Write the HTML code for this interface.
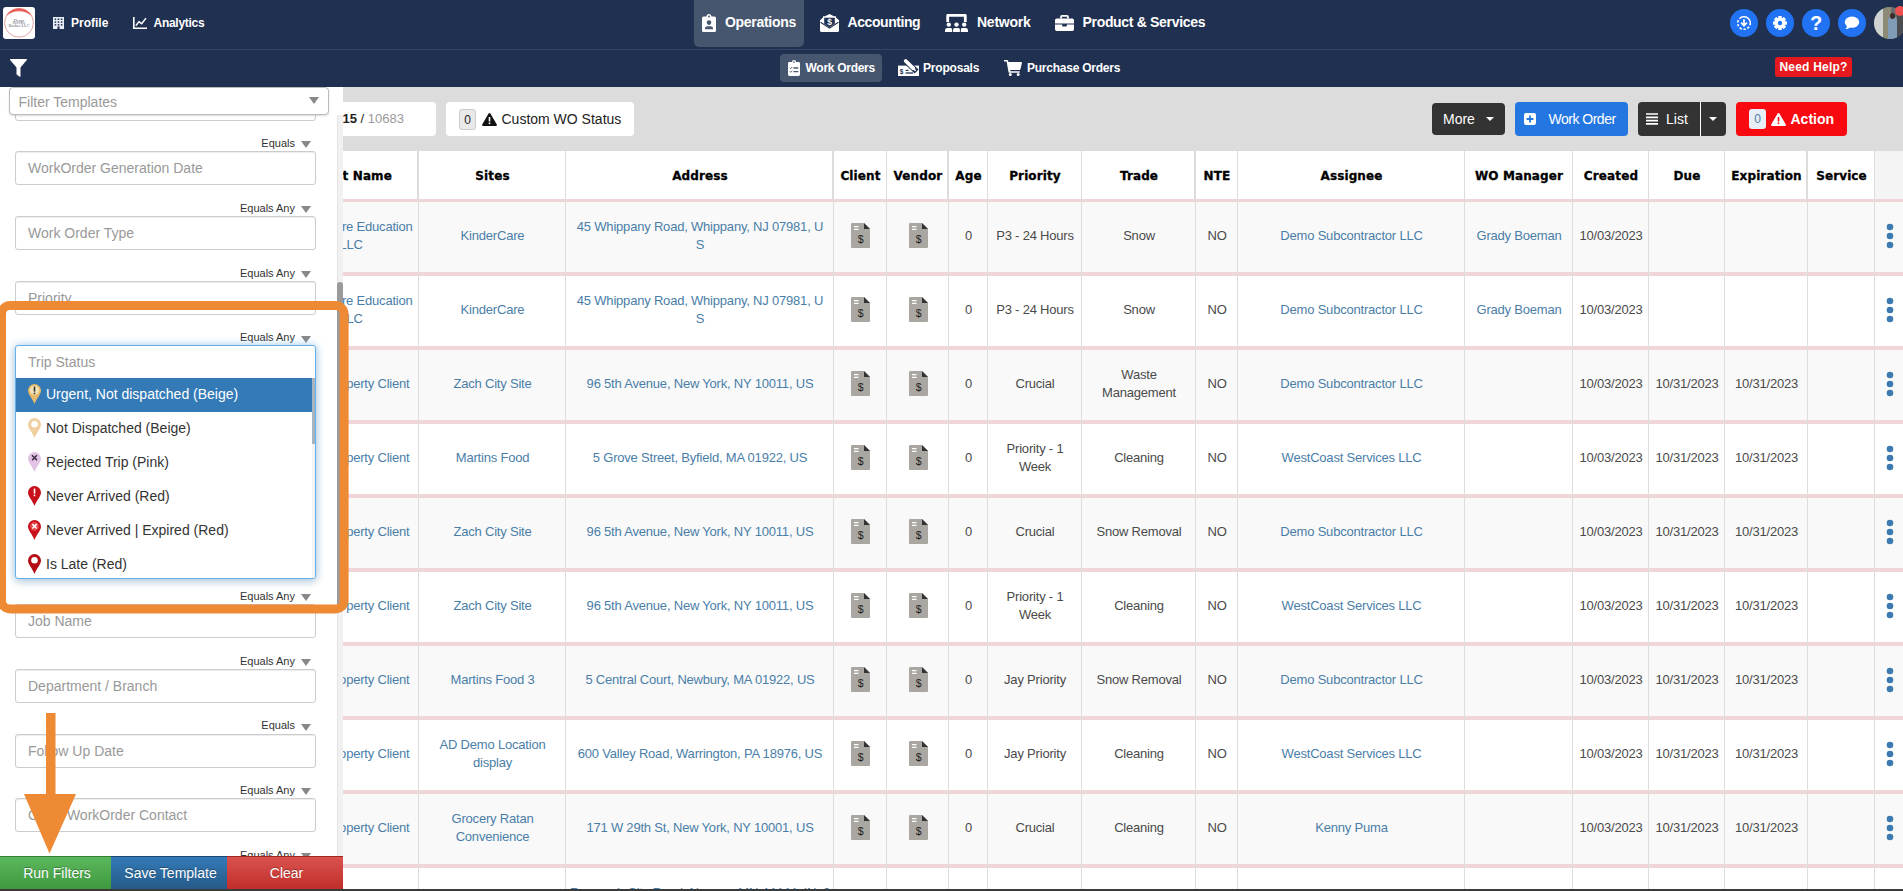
<!DOCTYPE html>
<html lang="en">
<head>
<meta charset="utf-8">
<title>Work Orders</title>
<style>
*{box-sizing:border-box;margin:0;padding:0}
html,body{width:1903px;height:891px;overflow:hidden;background:#dcdcdc;font-family:"Liberation Sans",Arial,sans-serif;color:#333}
svg{position:absolute;display:block;overflow:visible}
#nav{position:absolute;left:0;top:0;width:1903px;height:87px;background:#1f3050}
#navline{position:absolute;left:0;top:49px;width:1903px;height:1px;background:#35466a}
.nv{position:absolute;color:#fff;font-weight:bold;white-space:nowrap}
.n1{font-size:14px;top:14px;line-height:16px}
.n0{font-size:12px;top:16px;line-height:14px}
.n2{font-size:12px;top:61px;line-height:14px}
#optab{position:absolute;left:694px;top:0;width:110px;height:47px;background:#47566f;border-radius:0 0 5px 5px}
#wotab{position:absolute;left:780px;top:54px;width:102px;height:28px;background:#47566f;border-radius:4px}
.circ{position:absolute;top:9px;width:28px;height:28px;border-radius:50%;background:#2173f3}
#logo{position:absolute;left:3px;top:7px;width:32px;height:32px;background:#fff;border-radius:3px;overflow:hidden}
#needhelp{position:absolute;left:1775px;top:57px;width:77px;height:20px;background:#e61a1e;border-radius:3px;color:#fff;font-weight:bold;font-size:12px;line-height:20px;text-align:center;white-space:nowrap;letter-spacing:.2px}
/* toolbar */
.tb{position:absolute;top:102px;height:34px;border-radius:4px;font-size:14px;line-height:34px;white-space:nowrap;color:#fff}
.tb span{position:absolute;top:0}
/* table */
#tbl{position:absolute;left:343px;top:151px;width:1560px;height:738px;background:#fff;overflow:hidden}
.row{position:absolute;left:0;width:1560px;height:75px;border-top:3px solid #f1d6d8}
.row.odd{background:#f9f9f9}
.c{position:absolute;top:-2px;height:71px;display:flex;align-items:center;justify-content:center;text-align:center;font-size:13px;line-height:18px;letter-spacing:-.2px;padding-left:2px;color:#4a4a4a;white-space:nowrap}
.c>span{display:inline-block}
.c a{color:#4a7ea8;text-decoration:none}
.h{position:absolute;top:1px;height:48px;-webkit-text-stroke:.3px #000;letter-spacing:.12px;padding-left:2px;display:flex;align-items:center;justify-content:center;font-family:"DejaVu Sans","Liberation Sans",sans-serif;font-weight:bold;font-size:12px;color:#000;white-space:nowrap}
.vl{position:absolute;top:0;width:1px;height:740px;background:#dddddd}
/* panel */
#panel{position:absolute;left:0;top:87px;width:343px;height:802px;background:#fff;overflow:hidden}
.inp{position:absolute;left:15px;width:301px;height:34px;border:1px solid #ccc;border-radius:3px;background:#fff;font-size:14px;line-height:32px;padding-left:12px;color:#999;box-shadow:inset 0 1px 1px rgba(0,0,0,.075);white-space:nowrap}
.eq{position:absolute;right:48px;font-size:11px;line-height:12px;color:#333;white-space:nowrap}
.tri{position:absolute;left:301px;width:0;height:0;border-left:5px solid transparent;border-right:5px solid transparent;border-top:7.500px solid #888}
.opt{position:absolute;left:0;width:297px;height:34px;font-size:14px;line-height:34px;padding-left:30px;color:#333;white-space:nowrap}
.btn{position:absolute;top:769px;height:33px;padding-left:3px;color:#fff;font-size:14px;line-height:32px;border-top:1px solid rgba(0,0,0,.18);text-align:center;text-shadow:0 -1px 0 rgba(0,0,0,.3);white-space:nowrap}
</style>
</head>
<body>
<div id="nav">
<div id="navline"></div>
<div id="optab"></div><div id="wotab"></div>
<div id="logo"><svg width="32" height="32" viewBox="0 0 32 32" style="left:0;top:0"><circle cx="16" cy="15.800" r="14.400" fill="none" stroke="#dc8f8f" stroke-width="0.8"/><path d="M3.100 9 A14.600 14.600 0 0 1 28.900 9 A19.700 19.700 0 0 0 3.100 9Z" fill="#e8625c"/><text x="16" y="14.600" font-size="4.300" text-anchor="middle" fill="#667" font-family="Liberation Serif,serif">Demo</text><text x="16" y="17.400" font-size="4.300" text-anchor="middle" fill="#667" font-family="Liberation Serif,serif">Service</text><text x="16" y="20.200" font-size="4.300" text-anchor="middle" fill="#667" font-family="Liberation Serif,serif">Broker LLC</text></svg></div>
<svg width="11" height="12" viewBox="0 0 11 12" style="left:53px;top:17px"><path fill="#e9eef7" d="M0 0h11v12H6.6V9.6H4.4V12H0z"/><g fill="#1f3050"><rect x="1.6" y="1.5" width="1.6" height="1.5"/><rect x="4.7" y="1.5" width="1.6" height="1.5"/><rect x="7.8" y="1.5" width="1.6" height="1.5"/><rect x="1.6" y="4.3" width="1.6" height="1.5"/><rect x="4.7" y="4.3" width="1.6" height="1.5"/><rect x="7.8" y="4.3" width="1.6" height="1.5"/><rect x="1.6" y="7.1" width="1.6" height="1.5"/><rect x="4.7" y="7.1" width="1.6" height="1.5"/><rect x="7.8" y="7.1" width="1.6" height="1.5"/></g></svg>
<div class="nv n0" style="left:71px">Profile</div>
<svg width="14" height="12" viewBox="0 0 14 12" style="left:133px;top:17px"><path d="M0.8 0v11.2H14" fill="none" stroke="#fff" stroke-width="1.6"/><path d="M3.2 8.2L6 4.6l2.6 2.2L12.6 1.6" fill="none" stroke="#fff" stroke-width="1.5" stroke-linejoin="round" stroke-linecap="round"/></svg>
<div class="nv n0" style="left:153.5px;letter-spacing:-.27px">Analytics</div>
<svg width="14" height="18" viewBox="0 0 14 18" style="left:702px;top:14px"><path fill="#fff" d="M1.6 2.4h2.9a2.5 2.5 0 0 1 5 0h2.9A1.6 1.6 0 0 1 14 4v12.4A1.6 1.6 0 0 1 12.4 18H1.6A1.6 1.6 0 0 1 0 16.4V4a1.6 1.6 0 0 1 1.6-1.6z"/><circle cx="7" cy="2.5" r="0.9" fill="#47566f"/><circle cx="7" cy="8.6" r="2.3" fill="#47566f"/><path d="M3 15.2a2.6 2.6 0 0 1 2.6-2.9h2.8A2.6 2.6 0 0 1 11 15.2z" fill="#47566f"/></svg>
<div class="nv n1" style="left:725px;letter-spacing:-.3px">Operations</div>
<svg width="19" height="18" viewBox="0 0 19 18" style="left:820px;top:14px"><path fill="#fff" d="M0 6.2L3 3.6V2.2h2L9.5 0 14 2.2h2v1.4l3 2.6V16.4A1.6 1.6 0 0 1 17.4 18H1.6A1.6 1.6 0 0 1 0 16.4z"/><path fill="#1f3050" d="M4.200 3.800h10.600v6L9.500 13.400 4.200 9.800z"/><path d="M0.6 8.2l8.9 6 8.9-6" fill="none" stroke="#1f3050" stroke-width="1.1"/><text x="9.5" y="10.6" font-size="8.5" font-weight="bold" text-anchor="middle" fill="#fff" font-family="Liberation Sans,sans-serif">$</text></svg>
<div class="nv n1" style="left:847.5px;letter-spacing:-.43px">Accounting</div>
<svg width="23" height="18" viewBox="0 0 23 18" style="left:945px;top:14px"><path d="M2.700 8V1.400h17.600V8" fill="none" stroke="#fff" stroke-width="2.800" stroke-linejoin="round"/><g fill="#fff"><circle cx="3.800" cy="10.600" r="2.200"/><circle cx="11.500" cy="10.600" r="2.200"/><circle cx="19.200" cy="10.600" r="2.200"/><path d="M0 18v-1.600a2.400 2.400 0 0 1 2.400-2.400h2.800a2.400 2.400 0 0 1 2.400 2.400V18z"/><path d="M7.700 18v-1.600a2.400 2.400 0 0 1 2.400-2.400h2.800a2.400 2.400 0 0 1 2.400 2.400V18z"/><path d="M15.400 18v-1.600a2.400 2.400 0 0 1 2.400-2.400h2.800a2.400 2.400 0 0 1 2.400 2.400V18z"/></g><path d="M7.65 13v5M15.35 13v5" stroke="#1f3050" stroke-width="0.9"/></svg>
<div class="nv n1" style="left:977px;letter-spacing:-.24px">Network</div>
<svg width="19" height="16" viewBox="0 0 19 16" style="left:1055px;top:15px"><path d="M6 3.4V1.9A1 1 0 0 1 7 .9h5a1 1 0 0 1 1 1v1.5" fill="none" stroke="#fff" stroke-width="1.8"/><path fill="#fff" d="M1.7 3.4h15.6A1.7 1.7 0 0 1 19 5.1V8.4H0V5.1a1.7 1.7 0 0 1 1.7-1.7z"/><path fill="#fff" d="M0 9.6h7.2v1.1a.7.7 0 0 0 .7.7h3.2a.7.7 0 0 0 .7-.7V9.6H19v4.7a1.7 1.7 0 0 1-1.7 1.7H1.7A1.7 1.7 0 0 1 0 14.300z"/></svg>
<div class="nv n1" style="left:1082.5px;letter-spacing:-.32px">Product &amp; Services</div>
<div class="circ" style="left:1730px"></div>
<div class="circ" style="left:1766px"></div>
<div class="circ" style="left:1802px"></div>
<div class="circ" style="left:1838px"></div>
<svg width="28" height="28" viewBox="0 0 28 28" style="left:1730px;top:9px"><circle cx="14" cy="14" r="6.3" fill="none" stroke="#fff" stroke-width="1.6" stroke-dasharray="13 1.6 2.4 1.6 2.4 1.6 2.4 1.6 2.4 1.6 2.4 1.6" transform="rotate(-100 14 14)"/><path d="M14 10.2v5.6M11.2 13.6L14 16.8l2.8-3.200" stroke="#fff" stroke-width="1.7" fill="none"/></svg>
<svg width="28" height="28" viewBox="0 0 28 28" style="left:1766px;top:9px"><g transform="translate(14 14)" fill="#fff"><rect x="-1.800" y="-7" width="3.600" height="14" rx=".6" transform="rotate(0)"/><rect x="-1.800" y="-7" width="3.600" height="14" rx=".6" transform="rotate(45)"/><rect x="-1.800" y="-7" width="3.600" height="14" rx=".6" transform="rotate(90)"/><rect x="-1.800" y="-7" width="3.600" height="14" rx=".6" transform="rotate(135)"/><circle r="5.300"/></g><circle cx="14" cy="14" r="2.200" fill="#2173f3"/></svg>
<div class="nv" style="left:1802px;top:9px;width:28px;text-align:center;font-size:20px;line-height:28px;font-weight:bold">?</div>
<svg width="28" height="28" viewBox="0 0 28 28" style="left:1838px;top:9px"><ellipse cx="14" cy="13.2" rx="7.2" ry="5.6" fill="#fff"/><path d="M9 16.5c0 1.600-.8 3-1.800 3.600 2.200.1 4.200-.8 5.300-2.100z" fill="#fff"/></svg>
<div style="position:absolute;left:1874px;top:7px;width:32px;height:32px;border-radius:50%;overflow:hidden;background:#6a6d70"><div style="position:absolute;left:0;top:0;width:9px;height:32px;background:#cfd3d2"></div><div style="position:absolute;left:9px;top:0;width:8px;height:32px;background:#8d8a78"></div><div style="position:absolute;left:14px;top:10px;width:9px;height:22px;background:#7f9bb5;border-radius:3px 3px 0 0"></div><div style="position:absolute;left:16px;top:6px;width:5px;height:6px;background:#3a2c28;border-radius:50%"></div><div style="position:absolute;left:23px;top:0;width:9px;height:32px;background:#4a4c50"></div></div>
<div style="position:absolute;left:1895px;top:6px;width:10px;height:10px;border-radius:50%;background:#f0504f"></div>
<svg width="17" height="18" viewBox="0 0 17 18" style="left:9.5px;top:59px"><path fill="#fff" d="M.6 0h15.8a.6.6 0 0 1 .45 1L10.500 8.400V17.200a.6.6 0 0 1-1 .5L6.800 15.600a.9.9 0 0 1-.3-.7V8.400L.15 1A.6.6 0 0 1 .6 0z"/></svg>
<svg width="12" height="16" viewBox="0 0 12 16" style="left:788px;top:60px"><path fill="#fff" d="M1.400 2h2.500a2.100 2.100 0 0 1 4.200 0h2.500A1.400 1.400 0 0 1 12 3.400v11.200A1.400 1.400 0 0 1 10.600 16H1.400A1.400 1.400 0 0 1 0 14.600V3.400A1.400 1.400 0 0 1 1.400 2z"/><circle cx="6" cy="2.100" r=".8" fill="#47566f"/><g stroke="#47566f" stroke-width="1.400" fill="none"><path d="M5.400 8h4.800M5.400 11.600h4.800"/><path d="M1.800 7.800l.9.900 1.500-1.700M1.800 11.400l.9.900 1.500-1.700" stroke-width=".9"/></g></svg>
<div class="nv n2" style="left:805.5px;letter-spacing:-.28px">Work Orders</div>
<svg width="21" height="17" viewBox="0 0 21 17" style="left:898px;top:59px"><rect x="0" y="6.600" width="21" height="10.400" fill="#fff"/><path d="M6.600 0.900L18.600 12.600" stroke="#1f3050" stroke-width="5.600"/><path d="M7.700 2L15 9.100" stroke="#fff" stroke-width="3.800" stroke-linecap="round"/><path d="M13.500 10.500l2.900-2.900 1.700 4.600z" fill="#fff"/><path d="M7.600 14h7.400" stroke="#1f3050" stroke-width="1.300"/><path d="M7.600 11.400h3" stroke="#1f3050" stroke-width="1.100"/><text x="3.600" y="15.200" font-size="6.500" font-weight="bold" text-anchor="middle" fill="#1f3050" font-family="Liberation Sans,sans-serif">$</text></svg>
<div class="nv n2" style="left:923px;letter-spacing:-.2px">Proposals</div>
<svg width="18" height="16" viewBox="0 0 18 16" style="left:1004px;top:60px"><path fill="#fff" d="M0 0h3.300a.8.800 0 0 1 .75.600L4.400 2H17.200a.8.800 0 0 1 .75 1L16.400 9.300a.8.800 0 0 1-.75.600H6.200l.3 1.400h8.900a.8.800 0 0 1 0 1.500H5.300a.8.800 0 0 1-.75-.6L2.600 1.500H0z"/><circle cx="6.300" cy="14.500" r="1.500" fill="#fff"/><circle cx="14.200" cy="14.500" r="1.500" fill="#fff"/></svg>
<div class="nv n2" style="left:1027px;letter-spacing:-.24px">Purchase Orders</div>
<div id="needhelp">Need Help?</div>
</div>
<div class="tb" style="left:300px;width:136px;background:#fff;color:#222;font-size:13px"><span style="left:42.500px"><b style="color:#222">15</b> / <span style="position:static;color:#999">10683</span></span></div>
<div class="tb" style="left:446px;width:188px;background:#fff;color:#222"><div style="position:absolute;left:13px;top:7px;width:17px;height:21px;border:1px solid #ccc;border-radius:3px;background:#e9e9e9;font-size:12px;line-height:21px;text-align:center;color:#222">0</div><svg width="15" height="13" viewBox="0 0 15 13" style="left:36px;top:11px"><path d="M7.500 0a1 1 0 0 1 .9.500l6.400 11a1 1 0 0 1-.9 1.500H1.100a1 1 0 0 1-.9-1.500L6.600.5a1 1 0 0 1 .9-.5z" fill="#111"/><rect x="6.700" y="4" width="1.600" height="4.500" fill="#fff"/><rect x="6.700" y="9.500" width="1.600" height="1.600" fill="#fff"/></svg><span style="left:55.500px">Custom WO Status</span></div>
<div class="tb" style="left:1432px;top:103px;height:32px;line-height:32px;width:73px;background:#333"><span style="left:11px">More</span><div style="position:absolute;left:53.500px;top:14px;border-left:4px solid transparent;border-right:4px solid transparent;border-top:4px solid #fff"></div></div>
<div class="tb" style="left:1515px;width:113px;background:#2476e0"><svg width="12" height="12" viewBox="0 0 12 12" style="left:8.500px;top:11px"><rect width="12" height="12" rx="2" fill="#fff"/><path d="M6 2.600v6.800M2.600 6h6.800" stroke="#2476e0" stroke-width="1.800"/></svg><span style="left:33.500px;letter-spacing:-.5px">Work Order</span></div>
<div class="tb" style="left:1638px;width:88px;background:#333"><svg width="12" height="12" viewBox="0 0 12 12" style="left:8px;top:11px"><path d="M0 1h12M0 4.300h12M0 7.600h12M0 10.900h12" stroke="#fff" stroke-width="1.700"/></svg><span style="left:28px">List</span><div style="position:absolute;left:62px;top:0;width:1px;height:34px;background:#fff"></div><div style="position:absolute;left:71px;top:15px;border-left:4px solid transparent;border-right:4px solid transparent;border-top:4px solid #fff"></div></div>
<div class="tb" style="left:1736px;width:111px;background:#f80a10"><div style="position:absolute;left:13px;top:7px;width:17px;height:20px;border-radius:3px;background:#e8eef6;font-size:12px;line-height:20px;text-align:center;color:#4a7ea8">0</div><svg width="15" height="13" viewBox="0 0 15 13" style="left:34.500px;top:10.500px"><path d="M7.500 0a1 1 0 0 1 .9.500l6.400 11a1 1 0 0 1-.9 1.500H1.100a1 1 0 0 1-.9-1.500L6.600.5a1 1 0 0 1 .9-.5z" fill="#fff"/><rect x="6.700" y="4" width="1.600" height="4.500" fill="#f80a10"/><rect x="6.700" y="9.500" width="1.600" height="1.600" fill="#f80a10"/></svg><span style="left:54.500px;font-weight:bold">Action</span></div>
<div id="tbl">
<div class="vl" style="left:75px;z-index:2"></div>
<div class="vl" style="left:222px;z-index:2"></div>
<div class="vl" style="left:490px;z-index:2"></div>
<div class="vl" style="left:543px;z-index:2"></div>
<div class="vl" style="left:605px;z-index:2"></div>
<div class="vl" style="left:644px;z-index:2"></div>
<div class="vl" style="left:738px;z-index:2"></div>
<div class="vl" style="left:852px;z-index:2"></div>
<div class="vl" style="left:894px;z-index:2"></div>
<div class="vl" style="left:1121px;z-index:2"></div>
<div class="vl" style="left:1229px;z-index:2"></div>
<div class="vl" style="left:1305px;z-index:2"></div>
<div class="vl" style="left:1381px;z-index:2"></div>
<div class="vl" style="left:1464px;z-index:2"></div>
<div class="vl" style="left:1531px;z-index:2"></div>
<div style="position:absolute;left:1532px;top:0;width:30px;height:48px;background:#f4f4f4"></div>
<div style="position:absolute;left:74px;top:0;width:2px;height:48px;background:#dcdcdc;z-index:2"></div>
<div style="position:absolute;left:489px;top:0;width:2px;height:48px;background:#dcdcdc;z-index:2"></div>
<div style="position:absolute;left:604px;top:0;width:2px;height:48px;background:#dcdcdc;z-index:2"></div>
<div style="position:absolute;left:851px;top:0;width:2px;height:48px;background:#dcdcdc;z-index:2"></div>
<div style="position:absolute;left:1463px;top:0;width:2px;height:48px;background:#dcdcdc;z-index:2"></div>
<div class="h" style="left:-61px;width:136px;justify-content:flex-end;padding-right:26px">Client Name</div>
<div class="h" style="left:75px;width:147px">Sites</div>
<div class="h" style="left:222px;width:268px">Address</div>
<div class="h" style="left:490px;width:53px">Client</div>
<div class="h" style="left:543px;width:62px">Vendor</div>
<div class="h" style="left:605px;width:39px">Age</div>
<div class="h" style="left:644px;width:94px">Priority</div>
<div class="h" style="left:738px;width:114px">Trade</div>
<div class="h" style="left:852px;width:42px">NTE</div>
<div class="h" style="left:894px;width:227px">Assignee</div>
<div class="h" style="left:1121px;width:108px">WO Manager</div>
<div class="h" style="left:1229px;width:76px">Created</div>
<div class="h" style="left:1305px;width:76px">Due</div>
<div class="h" style="left:1381px;width:83px">Expiration</div>
<div class="h" style="left:1464px;width:67px">Service</div>
<div class="row odd" style="top:48px;border-top-width:3px">
<div class="c" style="left:-61px;width:136px"><span><a>KinderCare Education<br>LLC</a></span></div>
<div class="c" style="left:75px;width:147px;"><span><a>KinderCare</a></span></div>
<div class="c" style="left:222px;width:268px;"><span><a>45 Whippany Road, Whippany, NJ 07981, U<br>S</a></span></div>
<div class="c" style="left:490px;width:53px"><svg width="19" height="25" viewBox="0 0 19 25" style="position:static"><path d="M1 0h12l6 6v18a1 1 0 0 1-1 1H1a1 1 0 0 1-1-1V1a1 1 0 0 1 1-1z" fill="#aaa6a1"/><path d="M13 0l6 6h-6z" fill="#333"/><path d="M3 3.600h4.500M3 6.400h4.500" stroke="#fff" stroke-width="1.400"/><text x="9.500" y="20" font-size="10.500" text-anchor="middle" fill="#222" font-family="Liberation Sans,sans-serif">$</text></svg></div>
<div class="c" style="left:543px;width:62px"><svg width="19" height="25" viewBox="0 0 19 25" style="position:static"><path d="M1 0h12l6 6v18a1 1 0 0 1-1 1H1a1 1 0 0 1-1-1V1a1 1 0 0 1 1-1z" fill="#aaa6a1"/><path d="M13 0l6 6h-6z" fill="#333"/><path d="M3 3.600h4.500M3 6.400h4.500" stroke="#fff" stroke-width="1.400"/><text x="9.500" y="20" font-size="10.500" text-anchor="middle" fill="#222" font-family="Liberation Sans,sans-serif">$</text></svg></div>
<div class="c" style="left:605px;width:39px;"><span>0</span></div>
<div class="c" style="left:644px;width:94px;"><span>P3 - 24 Hours</span></div>
<div class="c" style="left:738px;width:114px;"><span>Snow</span></div>
<div class="c" style="left:852px;width:42px;"><span>NO</span></div>
<div class="c" style="left:894px;width:227px;"><span><a>Demo Subcontractor LLC</a></span></div>
<div class="c" style="left:1121px;width:108px;"><span><a>Grady Boeman</a></span></div>
<div class="c" style="left:1229px;width:76px;"><span>10/03/2023</span></div>
<div class="c" style="left:1532px;width:28px"><svg width="8" height="26" viewBox="0 0 8 26" style="position:static"><circle cx="4" cy="4" r="3.300" fill="#3d7ab0"/><circle cx="4" cy="13" r="3.300" fill="#3d7ab0"/><circle cx="4" cy="22" r="3.300" fill="#3d7ab0"/></svg></div>
</div>
<div class="row" style="top:121px;border-top-width:4px">
<div class="c" style="left:-61px;width:136px"><span><a>KinderCare Education<br>LLC</a></span></div>
<div class="c" style="left:75px;width:147px;"><span><a>KinderCare</a></span></div>
<div class="c" style="left:222px;width:268px;"><span><a>45 Whippany Road, Whippany, NJ 07981, U<br>S</a></span></div>
<div class="c" style="left:490px;width:53px"><svg width="19" height="25" viewBox="0 0 19 25" style="position:static"><path d="M1 0h12l6 6v18a1 1 0 0 1-1 1H1a1 1 0 0 1-1-1V1a1 1 0 0 1 1-1z" fill="#aaa6a1"/><path d="M13 0l6 6h-6z" fill="#333"/><path d="M3 3.600h4.500M3 6.400h4.500" stroke="#fff" stroke-width="1.400"/><text x="9.500" y="20" font-size="10.500" text-anchor="middle" fill="#222" font-family="Liberation Sans,sans-serif">$</text></svg></div>
<div class="c" style="left:543px;width:62px"><svg width="19" height="25" viewBox="0 0 19 25" style="position:static"><path d="M1 0h12l6 6v18a1 1 0 0 1-1 1H1a1 1 0 0 1-1-1V1a1 1 0 0 1 1-1z" fill="#aaa6a1"/><path d="M13 0l6 6h-6z" fill="#333"/><path d="M3 3.600h4.500M3 6.400h4.500" stroke="#fff" stroke-width="1.400"/><text x="9.500" y="20" font-size="10.500" text-anchor="middle" fill="#222" font-family="Liberation Sans,sans-serif">$</text></svg></div>
<div class="c" style="left:605px;width:39px;"><span>0</span></div>
<div class="c" style="left:644px;width:94px;"><span>P3 - 24 Hours</span></div>
<div class="c" style="left:738px;width:114px;"><span>Snow</span></div>
<div class="c" style="left:852px;width:42px;"><span>NO</span></div>
<div class="c" style="left:894px;width:227px;"><span><a>Demo Subcontractor LLC</a></span></div>
<div class="c" style="left:1121px;width:108px;"><span><a>Grady Boeman</a></span></div>
<div class="c" style="left:1229px;width:76px;"><span>10/03/2023</span></div>
<div class="c" style="left:1532px;width:28px"><svg width="8" height="26" viewBox="0 0 8 26" style="position:static"><circle cx="4" cy="4" r="3.300" fill="#3d7ab0"/><circle cx="4" cy="13" r="3.300" fill="#3d7ab0"/><circle cx="4" cy="22" r="3.300" fill="#3d7ab0"/></svg></div>
</div>
<div class="row odd" style="top:195px;border-top-width:4px">
<div class="c" style="left:-61px;width:136px;justify-content:flex-end;padding-right:8.500px"><span><a>Property Client</a></span></div>
<div class="c" style="left:75px;width:147px;"><span><a>Zach City Site</a></span></div>
<div class="c" style="left:222px;width:268px;"><span><a>96 5th Avenue, New York, NY 10011, US</a></span></div>
<div class="c" style="left:490px;width:53px"><svg width="19" height="25" viewBox="0 0 19 25" style="position:static"><path d="M1 0h12l6 6v18a1 1 0 0 1-1 1H1a1 1 0 0 1-1-1V1a1 1 0 0 1 1-1z" fill="#aaa6a1"/><path d="M13 0l6 6h-6z" fill="#333"/><path d="M3 3.600h4.500M3 6.400h4.500" stroke="#fff" stroke-width="1.400"/><text x="9.500" y="20" font-size="10.500" text-anchor="middle" fill="#222" font-family="Liberation Sans,sans-serif">$</text></svg></div>
<div class="c" style="left:543px;width:62px"><svg width="19" height="25" viewBox="0 0 19 25" style="position:static"><path d="M1 0h12l6 6v18a1 1 0 0 1-1 1H1a1 1 0 0 1-1-1V1a1 1 0 0 1 1-1z" fill="#aaa6a1"/><path d="M13 0l6 6h-6z" fill="#333"/><path d="M3 3.600h4.500M3 6.400h4.500" stroke="#fff" stroke-width="1.400"/><text x="9.500" y="20" font-size="10.500" text-anchor="middle" fill="#222" font-family="Liberation Sans,sans-serif">$</text></svg></div>
<div class="c" style="left:605px;width:39px;"><span>0</span></div>
<div class="c" style="left:644px;width:94px;"><span>Crucial</span></div>
<div class="c" style="left:738px;width:114px;"><span>Waste<br>Management</span></div>
<div class="c" style="left:852px;width:42px;"><span>NO</span></div>
<div class="c" style="left:894px;width:227px;"><span><a>Demo Subcontractor LLC</a></span></div>
<div class="c" style="left:1229px;width:76px;"><span>10/03/2023</span></div>
<div class="c" style="left:1305px;width:76px;"><span>10/31/2023</span></div>
<div class="c" style="left:1381px;width:83px;"><span>10/31/2023</span></div>
<div class="c" style="left:1532px;width:28px"><svg width="8" height="26" viewBox="0 0 8 26" style="position:static"><circle cx="4" cy="4" r="3.300" fill="#3d7ab0"/><circle cx="4" cy="13" r="3.300" fill="#3d7ab0"/><circle cx="4" cy="22" r="3.300" fill="#3d7ab0"/></svg></div>
</div>
<div class="row" style="top:269px;border-top-width:4px">
<div class="c" style="left:-61px;width:136px;justify-content:flex-end;padding-right:8.500px"><span><a>Property Client</a></span></div>
<div class="c" style="left:75px;width:147px;"><span><a>Martins Food</a></span></div>
<div class="c" style="left:222px;width:268px;"><span><a>5 Grove Street, Byfield, MA 01922, US</a></span></div>
<div class="c" style="left:490px;width:53px"><svg width="19" height="25" viewBox="0 0 19 25" style="position:static"><path d="M1 0h12l6 6v18a1 1 0 0 1-1 1H1a1 1 0 0 1-1-1V1a1 1 0 0 1 1-1z" fill="#aaa6a1"/><path d="M13 0l6 6h-6z" fill="#333"/><path d="M3 3.600h4.500M3 6.400h4.500" stroke="#fff" stroke-width="1.400"/><text x="9.500" y="20" font-size="10.500" text-anchor="middle" fill="#222" font-family="Liberation Sans,sans-serif">$</text></svg></div>
<div class="c" style="left:543px;width:62px"><svg width="19" height="25" viewBox="0 0 19 25" style="position:static"><path d="M1 0h12l6 6v18a1 1 0 0 1-1 1H1a1 1 0 0 1-1-1V1a1 1 0 0 1 1-1z" fill="#aaa6a1"/><path d="M13 0l6 6h-6z" fill="#333"/><path d="M3 3.600h4.500M3 6.400h4.500" stroke="#fff" stroke-width="1.400"/><text x="9.500" y="20" font-size="10.500" text-anchor="middle" fill="#222" font-family="Liberation Sans,sans-serif">$</text></svg></div>
<div class="c" style="left:605px;width:39px;"><span>0</span></div>
<div class="c" style="left:644px;width:94px;"><span>Priority - 1<br>Week</span></div>
<div class="c" style="left:738px;width:114px;"><span>Cleaning</span></div>
<div class="c" style="left:852px;width:42px;"><span>NO</span></div>
<div class="c" style="left:894px;width:227px;"><span><a>WestCoast Services LLC</a></span></div>
<div class="c" style="left:1229px;width:76px;"><span>10/03/2023</span></div>
<div class="c" style="left:1305px;width:76px;"><span>10/31/2023</span></div>
<div class="c" style="left:1381px;width:83px;"><span>10/31/2023</span></div>
<div class="c" style="left:1532px;width:28px"><svg width="8" height="26" viewBox="0 0 8 26" style="position:static"><circle cx="4" cy="4" r="3.300" fill="#3d7ab0"/><circle cx="4" cy="13" r="3.300" fill="#3d7ab0"/><circle cx="4" cy="22" r="3.300" fill="#3d7ab0"/></svg></div>
</div>
<div class="row odd" style="top:343px;border-top-width:4px">
<div class="c" style="left:-61px;width:136px;justify-content:flex-end;padding-right:8.500px"><span><a>Property Client</a></span></div>
<div class="c" style="left:75px;width:147px;"><span><a>Zach City Site</a></span></div>
<div class="c" style="left:222px;width:268px;"><span><a>96 5th Avenue, New York, NY 10011, US</a></span></div>
<div class="c" style="left:490px;width:53px"><svg width="19" height="25" viewBox="0 0 19 25" style="position:static"><path d="M1 0h12l6 6v18a1 1 0 0 1-1 1H1a1 1 0 0 1-1-1V1a1 1 0 0 1 1-1z" fill="#aaa6a1"/><path d="M13 0l6 6h-6z" fill="#333"/><path d="M3 3.600h4.500M3 6.400h4.500" stroke="#fff" stroke-width="1.400"/><text x="9.500" y="20" font-size="10.500" text-anchor="middle" fill="#222" font-family="Liberation Sans,sans-serif">$</text></svg></div>
<div class="c" style="left:543px;width:62px"><svg width="19" height="25" viewBox="0 0 19 25" style="position:static"><path d="M1 0h12l6 6v18a1 1 0 0 1-1 1H1a1 1 0 0 1-1-1V1a1 1 0 0 1 1-1z" fill="#aaa6a1"/><path d="M13 0l6 6h-6z" fill="#333"/><path d="M3 3.600h4.500M3 6.400h4.500" stroke="#fff" stroke-width="1.400"/><text x="9.500" y="20" font-size="10.500" text-anchor="middle" fill="#222" font-family="Liberation Sans,sans-serif">$</text></svg></div>
<div class="c" style="left:605px;width:39px;"><span>0</span></div>
<div class="c" style="left:644px;width:94px;"><span>Crucial</span></div>
<div class="c" style="left:738px;width:114px;"><span>Snow Removal</span></div>
<div class="c" style="left:852px;width:42px;"><span>NO</span></div>
<div class="c" style="left:894px;width:227px;"><span><a>Demo Subcontractor LLC</a></span></div>
<div class="c" style="left:1229px;width:76px;"><span>10/03/2023</span></div>
<div class="c" style="left:1305px;width:76px;"><span>10/31/2023</span></div>
<div class="c" style="left:1381px;width:83px;"><span>10/31/2023</span></div>
<div class="c" style="left:1532px;width:28px"><svg width="8" height="26" viewBox="0 0 8 26" style="position:static"><circle cx="4" cy="4" r="3.300" fill="#3d7ab0"/><circle cx="4" cy="13" r="3.300" fill="#3d7ab0"/><circle cx="4" cy="22" r="3.300" fill="#3d7ab0"/></svg></div>
</div>
<div class="row" style="top:417px;border-top-width:4px">
<div class="c" style="left:-61px;width:136px;justify-content:flex-end;padding-right:8.500px"><span><a>Property Client</a></span></div>
<div class="c" style="left:75px;width:147px;"><span><a>Zach City Site</a></span></div>
<div class="c" style="left:222px;width:268px;"><span><a>96 5th Avenue, New York, NY 10011, US</a></span></div>
<div class="c" style="left:490px;width:53px"><svg width="19" height="25" viewBox="0 0 19 25" style="position:static"><path d="M1 0h12l6 6v18a1 1 0 0 1-1 1H1a1 1 0 0 1-1-1V1a1 1 0 0 1 1-1z" fill="#aaa6a1"/><path d="M13 0l6 6h-6z" fill="#333"/><path d="M3 3.600h4.500M3 6.400h4.500" stroke="#fff" stroke-width="1.400"/><text x="9.500" y="20" font-size="10.500" text-anchor="middle" fill="#222" font-family="Liberation Sans,sans-serif">$</text></svg></div>
<div class="c" style="left:543px;width:62px"><svg width="19" height="25" viewBox="0 0 19 25" style="position:static"><path d="M1 0h12l6 6v18a1 1 0 0 1-1 1H1a1 1 0 0 1-1-1V1a1 1 0 0 1 1-1z" fill="#aaa6a1"/><path d="M13 0l6 6h-6z" fill="#333"/><path d="M3 3.600h4.500M3 6.400h4.500" stroke="#fff" stroke-width="1.400"/><text x="9.500" y="20" font-size="10.500" text-anchor="middle" fill="#222" font-family="Liberation Sans,sans-serif">$</text></svg></div>
<div class="c" style="left:605px;width:39px;"><span>0</span></div>
<div class="c" style="left:644px;width:94px;"><span>Priority - 1<br>Week</span></div>
<div class="c" style="left:738px;width:114px;"><span>Cleaning</span></div>
<div class="c" style="left:852px;width:42px;"><span>NO</span></div>
<div class="c" style="left:894px;width:227px;"><span><a>WestCoast Services LLC</a></span></div>
<div class="c" style="left:1229px;width:76px;"><span>10/03/2023</span></div>
<div class="c" style="left:1305px;width:76px;"><span>10/31/2023</span></div>
<div class="c" style="left:1381px;width:83px;"><span>10/31/2023</span></div>
<div class="c" style="left:1532px;width:28px"><svg width="8" height="26" viewBox="0 0 8 26" style="position:static"><circle cx="4" cy="4" r="3.300" fill="#3d7ab0"/><circle cx="4" cy="13" r="3.300" fill="#3d7ab0"/><circle cx="4" cy="22" r="3.300" fill="#3d7ab0"/></svg></div>
</div>
<div class="row odd" style="top:491px;border-top-width:4px">
<div class="c" style="left:-61px;width:136px;justify-content:flex-end;padding-right:8.500px"><span><a>Property Client</a></span></div>
<div class="c" style="left:75px;width:147px;"><span><a>Martins Food 3</a></span></div>
<div class="c" style="left:222px;width:268px;"><span><a>5 Central Court, Newbury, MA 01922, US</a></span></div>
<div class="c" style="left:490px;width:53px"><svg width="19" height="25" viewBox="0 0 19 25" style="position:static"><path d="M1 0h12l6 6v18a1 1 0 0 1-1 1H1a1 1 0 0 1-1-1V1a1 1 0 0 1 1-1z" fill="#aaa6a1"/><path d="M13 0l6 6h-6z" fill="#333"/><path d="M3 3.600h4.500M3 6.400h4.500" stroke="#fff" stroke-width="1.400"/><text x="9.500" y="20" font-size="10.500" text-anchor="middle" fill="#222" font-family="Liberation Sans,sans-serif">$</text></svg></div>
<div class="c" style="left:543px;width:62px"><svg width="19" height="25" viewBox="0 0 19 25" style="position:static"><path d="M1 0h12l6 6v18a1 1 0 0 1-1 1H1a1 1 0 0 1-1-1V1a1 1 0 0 1 1-1z" fill="#aaa6a1"/><path d="M13 0l6 6h-6z" fill="#333"/><path d="M3 3.600h4.500M3 6.400h4.500" stroke="#fff" stroke-width="1.400"/><text x="9.500" y="20" font-size="10.500" text-anchor="middle" fill="#222" font-family="Liberation Sans,sans-serif">$</text></svg></div>
<div class="c" style="left:605px;width:39px;"><span>0</span></div>
<div class="c" style="left:644px;width:94px;"><span>Jay Priority</span></div>
<div class="c" style="left:738px;width:114px;"><span>Snow Removal</span></div>
<div class="c" style="left:852px;width:42px;"><span>NO</span></div>
<div class="c" style="left:894px;width:227px;"><span><a>Demo Subcontractor LLC</a></span></div>
<div class="c" style="left:1229px;width:76px;"><span>10/03/2023</span></div>
<div class="c" style="left:1305px;width:76px;"><span>10/31/2023</span></div>
<div class="c" style="left:1381px;width:83px;"><span>10/31/2023</span></div>
<div class="c" style="left:1532px;width:28px"><svg width="8" height="26" viewBox="0 0 8 26" style="position:static"><circle cx="4" cy="4" r="3.300" fill="#3d7ab0"/><circle cx="4" cy="13" r="3.300" fill="#3d7ab0"/><circle cx="4" cy="22" r="3.300" fill="#3d7ab0"/></svg></div>
</div>
<div class="row" style="top:565px;border-top-width:4px">
<div class="c" style="left:-61px;width:136px;justify-content:flex-end;padding-right:8.500px"><span><a>Property Client</a></span></div>
<div class="c" style="left:75px;width:147px;"><span><a>AD Demo Location<br>display</a></span></div>
<div class="c" style="left:222px;width:268px;"><span><a>600 Valley Road, Warrington, PA 18976, US</a></span></div>
<div class="c" style="left:490px;width:53px"><svg width="19" height="25" viewBox="0 0 19 25" style="position:static"><path d="M1 0h12l6 6v18a1 1 0 0 1-1 1H1a1 1 0 0 1-1-1V1a1 1 0 0 1 1-1z" fill="#aaa6a1"/><path d="M13 0l6 6h-6z" fill="#333"/><path d="M3 3.600h4.500M3 6.400h4.500" stroke="#fff" stroke-width="1.400"/><text x="9.500" y="20" font-size="10.500" text-anchor="middle" fill="#222" font-family="Liberation Sans,sans-serif">$</text></svg></div>
<div class="c" style="left:543px;width:62px"><svg width="19" height="25" viewBox="0 0 19 25" style="position:static"><path d="M1 0h12l6 6v18a1 1 0 0 1-1 1H1a1 1 0 0 1-1-1V1a1 1 0 0 1 1-1z" fill="#aaa6a1"/><path d="M13 0l6 6h-6z" fill="#333"/><path d="M3 3.600h4.500M3 6.400h4.500" stroke="#fff" stroke-width="1.400"/><text x="9.500" y="20" font-size="10.500" text-anchor="middle" fill="#222" font-family="Liberation Sans,sans-serif">$</text></svg></div>
<div class="c" style="left:605px;width:39px;"><span>0</span></div>
<div class="c" style="left:644px;width:94px;"><span>Jay Priority</span></div>
<div class="c" style="left:738px;width:114px;"><span>Cleaning</span></div>
<div class="c" style="left:852px;width:42px;"><span>NO</span></div>
<div class="c" style="left:894px;width:227px;"><span><a>WestCoast Services LLC</a></span></div>
<div class="c" style="left:1229px;width:76px;"><span>10/03/2023</span></div>
<div class="c" style="left:1305px;width:76px;"><span>10/31/2023</span></div>
<div class="c" style="left:1381px;width:83px;"><span>10/31/2023</span></div>
<div class="c" style="left:1532px;width:28px"><svg width="8" height="26" viewBox="0 0 8 26" style="position:static"><circle cx="4" cy="4" r="3.300" fill="#3d7ab0"/><circle cx="4" cy="13" r="3.300" fill="#3d7ab0"/><circle cx="4" cy="22" r="3.300" fill="#3d7ab0"/></svg></div>
</div>
<div class="row odd" style="top:639px;border-top-width:4px">
<div class="c" style="left:-61px;width:136px;justify-content:flex-end;padding-right:8.500px"><span><a>Property Client</a></span></div>
<div class="c" style="left:75px;width:147px;"><span><a>Grocery Ratan<br>Convenience</a></span></div>
<div class="c" style="left:222px;width:268px;"><span><a>171 W 29th St, New York, NY 10001, US</a></span></div>
<div class="c" style="left:490px;width:53px"><svg width="19" height="25" viewBox="0 0 19 25" style="position:static"><path d="M1 0h12l6 6v18a1 1 0 0 1-1 1H1a1 1 0 0 1-1-1V1a1 1 0 0 1 1-1z" fill="#aaa6a1"/><path d="M13 0l6 6h-6z" fill="#333"/><path d="M3 3.600h4.500M3 6.400h4.500" stroke="#fff" stroke-width="1.400"/><text x="9.500" y="20" font-size="10.500" text-anchor="middle" fill="#222" font-family="Liberation Sans,sans-serif">$</text></svg></div>
<div class="c" style="left:543px;width:62px"><svg width="19" height="25" viewBox="0 0 19 25" style="position:static"><path d="M1 0h12l6 6v18a1 1 0 0 1-1 1H1a1 1 0 0 1-1-1V1a1 1 0 0 1 1-1z" fill="#aaa6a1"/><path d="M13 0l6 6h-6z" fill="#333"/><path d="M3 3.600h4.500M3 6.400h4.500" stroke="#fff" stroke-width="1.400"/><text x="9.500" y="20" font-size="10.500" text-anchor="middle" fill="#222" font-family="Liberation Sans,sans-serif">$</text></svg></div>
<div class="c" style="left:605px;width:39px;"><span>0</span></div>
<div class="c" style="left:644px;width:94px;"><span>Crucial</span></div>
<div class="c" style="left:738px;width:114px;"><span>Cleaning</span></div>
<div class="c" style="left:852px;width:42px;"><span>NO</span></div>
<div class="c" style="left:894px;width:227px;"><span><a>Kenny Puma</a></span></div>
<div class="c" style="left:1229px;width:76px;"><span>10/03/2023</span></div>
<div class="c" style="left:1305px;width:76px;"><span>10/31/2023</span></div>
<div class="c" style="left:1381px;width:83px;"><span>10/31/2023</span></div>
<div class="c" style="left:1532px;width:28px"><svg width="8" height="26" viewBox="0 0 8 26" style="position:static"><circle cx="4" cy="4" r="3.300" fill="#3d7ab0"/><circle cx="4" cy="13" r="3.300" fill="#3d7ab0"/><circle cx="4" cy="22" r="3.300" fill="#3d7ab0"/></svg></div>
</div>
<div class="row" style="top:713px;border-top-width:4px">
<div class="c" style="left:222px;width:268px;"><span><a>Research City Road, Norway, MN 44444, IN, 2<br>S</a></span></div>
</div>
</div>
<div id="panel">
<div style="position:absolute;left:337px;top:28px;width:6px;height:741px;background:#f1f1f1;border-left:1px solid #e4e4e4"></div>
<div style="position:absolute;left:336.500px;top:195px;width:6.500px;height:330px;background:#9a9a9a;border-radius:3px"></div>
<div class="inp" style="top:0px;height:33.500px"></div>
<div style="position:absolute;left:9px;top:0;width:320px;height:28px;border:1px solid #bbb;border-radius:4px;background:#fff;font-size:14px;line-height:29px;padding-left:8.500px;color:#999;box-shadow:0 1px 2px rgba(0,0,0,.15)">Filter Templates</div>
<div class="tri" style="left:309px;top:10px"></div>
<div class="eq" style="top:49.5px">Equals</div>
<div class="tri" style="top:54px"></div>
<div class="inp" style="top:64px">WorkOrder Generation Date</div>
<div class="eq" style="top:114.5px">Equals Any</div>
<div class="tri" style="top:119px"></div>
<div class="inp" style="top:129px">Work Order Type</div>
<div class="eq" style="top:179.5px">Equals Any</div>
<div class="tri" style="top:184px"></div>
<div class="inp" style="top:194px">Priority</div>
<div class="eq" style="top:244.0px">Equals Any</div>
<div class="tri" style="top:248.5px"></div>
<div class="eq" style="top:502.5px">Equals Any</div>
<div class="tri" style="top:507px"></div>
<div class="inp" style="top:517px">Job Name</div>
<div class="eq" style="top:567.5px">Equals Any</div>
<div class="tri" style="top:572px"></div>
<div class="inp" style="top:582px">Department / Branch</div>
<div class="eq" style="top:632.0px">Equals</div>
<div class="tri" style="top:636.5px"></div>
<div class="inp" style="top:646.5px">Follow Up Date</div>
<div class="eq" style="top:696.5px">Equals Any</div>
<div class="tri" style="top:701px"></div>
<div class="inp" style="top:711px">Other WorkOrder Contact</div>
<div class="eq" style="top:761.5px">Equals Any</div>
<div class="tri" style="top:766px"></div>
<div class="inp" style="top:776px">x</div>
<div style="position:absolute;left:15px;top:257.500px;width:301px;height:234px;border:1px solid #66afe9;border-radius:3px;background:#fff;box-shadow:0 0 8px rgba(102,175,233,.6),0 4px 8px rgba(0,0,0,.12);overflow:hidden">
<div style="position:absolute;left:12px;top:0;font-size:14px;line-height:32px;color:#999">Trip Status</div>
<div class="opt" style="top:32px;line-height:32px;background:#337ab7;color:#fff;"><svg width="13" height="20" viewBox="0 0 13 20" style="left:12px;top:6.500px"><path d="M6.500 0A6.500 6.500 0 0 1 13 6.500C13 10.500 8.500 14.500 6.500 20 4.500 14.500 0 10.500 0 6.500A6.500 6.500 0 0 1 6.500 0z" fill="#e8b96a"/><circle cx="6.500" cy="6.300" r="4.600" fill="#f3e3b8"/><rect x="5.700" y="2.600" width="1.600" height="5" fill="#333"/><rect x="5.700" y="8.600" width="1.600" height="1.600" fill="#333"/></svg>Urgent, Not dispatched (Beige)</div>
<div class="opt" style="top:66px;line-height:32px;"><svg width="13" height="20" viewBox="0 0 13 20" style="left:12px;top:6.500px"><path d="M6.500 0A6.500 6.500 0 0 1 13 6.500C13 10.500 8.500 14.500 6.500 20 4.500 14.500 0 10.500 0 6.500A6.500 6.500 0 0 1 6.500 0z" fill="#efcfa0"/><circle cx="6.500" cy="6.300" r="3.300" fill="#fff"/></svg>Not Dispatched (Beige)</div>
<div class="opt" style="top:100px;line-height:32px;"><svg width="13" height="20" viewBox="0 0 13 20" style="left:12px;top:6.500px"><path d="M6.500 0A6.500 6.500 0 0 1 13 6.500C13 10.500 8.500 14.500 6.500 20 4.500 14.500 0 10.500 0 6.500A6.500 6.500 0 0 1 6.500 0z" fill="#e2c3e6"/><path d="M4 3.300l5 5M9 3.300l-5 5" stroke="#3a2a40" stroke-width="1.500"/></svg>Rejected Trip (Pink)</div>
<div class="opt" style="top:134px;line-height:32px;"><svg width="13" height="20" viewBox="0 0 13 20" style="left:12px;top:6.500px"><path d="M6.500 0A6.500 6.500 0 0 1 13 6.500C13 10.500 8.500 14.500 6.500 20 4.500 14.500 0 10.500 0 6.500A6.500 6.500 0 0 1 6.500 0z" fill="#c8101a"/><rect x="5.700" y="2.600" width="1.600" height="5" fill="#fff"/><rect x="5.700" y="8.600" width="1.600" height="1.600" fill="#fff"/></svg>Never Arrived (Red)</div>
<div class="opt" style="top:168px;line-height:32px;"><svg width="13" height="20" viewBox="0 0 13 20" style="left:12px;top:6.500px"><path d="M6.500 0A6.500 6.500 0 0 1 13 6.500C13 10.500 8.500 14.500 6.500 20 4.500 14.500 0 10.500 0 6.500A6.500 6.500 0 0 1 6.500 0z" fill="#c8101a"/><circle cx="6.500" cy="6.300" r="4.400" fill="#e8474d"/><path d="M4.300 4.100l4.400 4.400M8.700 4.100l-4.400 4.400" stroke="#fff" stroke-width="1.500"/></svg>Never Arrived | Expired (Red)</div>
<div class="opt" style="top:202px;line-height:32px;"><svg width="13" height="20" viewBox="0 0 13 20" style="left:12px;top:6.500px"><path d="M6.500 0A6.500 6.500 0 0 1 13 6.500C13 10.500 8.500 14.500 6.500 20 4.500 14.500 0 10.500 0 6.500A6.500 6.500 0 0 1 6.500 0z" fill="#b40d16"/><circle cx="6.500" cy="6.300" r="3.300" fill="#fff"/></svg>Is Late (Red)</div>
<div style="position:absolute;left:296px;top:32px;width:4px;height:201px;background:#f4f4f4"></div>
<div style="position:absolute;left:296px;top:32px;width:4px;height:66px;background:#a9b4c2"></div>
</div>
<div class="btn" style="left:0;width:111px;background:linear-gradient(#5cb85c,#3f9a3f)">Run Filters</div>
<div class="btn" style="left:111px;width:116px;background:linear-gradient(#337ab7,#265a88)">Save Template</div>
<div class="btn" style="left:227px;width:116px;background:linear-gradient(#d9534f,#c12e2a)">Clear</div>
</div>
<svg width="360" height="891" viewBox="0 0 360 891" style="left:0;top:0;z-index:50"><rect x="1.500" y="305.600" width="342.600" height="303.300" rx="8.500" fill="none" stroke="#ee8a33" stroke-width="9"/><path d="M46 713h9.500v81H76L49.500 853.500 24 794h22z" fill="#ee8a33"/></svg>
<div style="position:absolute;left:0;top:889px;width:1903px;height:2px;background:#3a3a3a;z-index:60"></div>
</body>
</html>
